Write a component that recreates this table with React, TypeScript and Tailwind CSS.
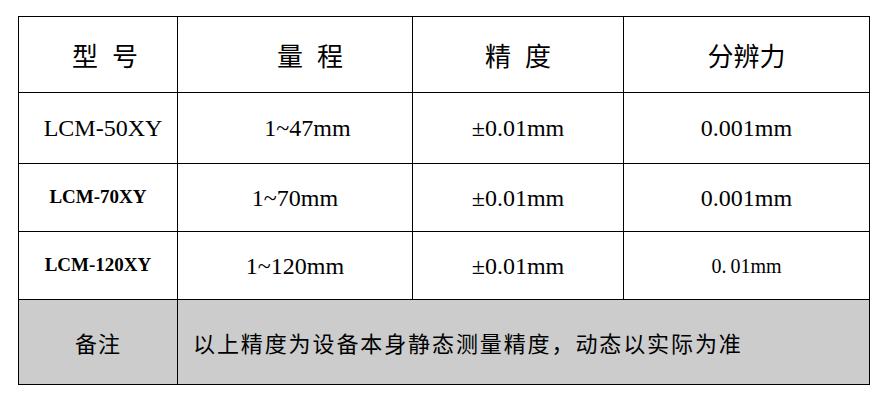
import React from "react";

const cjk = "font-['Noto_Sans_CJK_SC',sans-serif]";
const serif = "font-['Liberation_Serif','Noto_Sans_CJK_SC',serif]";

type Row = {
  model: string;
  modelClass: string;
  range: string;
  rangeClass?: string;
  precision: string;
  resolution: string;
  resClass: string;
  height: string;
};

const rows: Row[] = [
  {
    model: "LCM-50XY",
    modelClass: "text-[24px] font-normal pl-[10px]",
    range: "1~47mm",
    rangeClass: "pl-[25px]",
    precision: "±0.01mm",
    resolution: "0.001mm",
    resClass: "text-[24px]",
    height: "h-[71px]",
  },
  {
    model: "LCM-70XY",
    modelClass: "text-[19px] font-bold",
    range: "1~70mm",
    precision: "±0.01mm",
    resolution: "0.001mm",
    resClass: "text-[24px]",
    height: "h-[68px]",
  },
  {
    model: "LCM-120XY",
    modelClass: "text-[19px] font-bold",
    range: "1~120mm",
    precision: "±0.01mm",
    resolution: "0.\u200901mm",
    resClass: "text-[20px]",
    height: "h-[68px]",
  },
];

function Spaced({ a, b }: { a: string; b: string }) {
  return (
    <>
      {a}
      <span className="inline-block w-[14px]" />
      {b}
    </>
  );
}

export default function App() {
  const cell = "border border-black text-center align-middle p-0";
  return (
    <div className="w-[883px] h-[404px] bg-white pt-[16px] pl-[18px]">
      <table className="border-collapse table-fixed w-[851px] text-black">
        <colgroup>
          <col className="w-[159px]" />
          <col className="w-[235px]" />
          <col className="w-[211px]" />
          <col className="w-[246px]" />
        </colgroup>
        <tbody>
          <tr className="h-[76px]">
            <td className={`${cell} ${cjk} text-[26px] pl-[14px]`}>
              <Spaced a="型" b="号" />
            </td>
            <td className={`${cell} ${cjk} text-[26px] pl-[30px]`}>
              <Spaced a="量" b="程" />
            </td>
            <td className={`${cell} ${cjk} text-[26px]`}>
              <Spaced a="精" b="度" />
            </td>
            <td className={`${cell} ${cjk} text-[26px]`}>分辨力</td>
          </tr>
          {rows.map((r) => (
            <tr key={r.model} className={r.height}>
              <td className={`${cell} ${serif} ${r.modelClass}`}>{r.model}</td>
              <td className={`${cell} ${serif} text-[24px] ${r.rangeClass ?? ""}`}>{r.range}</td>
              <td className={`${cell} ${serif} text-[24px]`}>{r.precision}</td>
              <td className={`${cell} ${serif} ${r.resClass}`}>{r.resolution}</td>
            </tr>
          ))}
          <tr className="h-[85px] bg-[#cccccc]">
            <td className={`${cell} ${cjk} text-[22px] tracking-[1px]`}>备注</td>
            <td
              colSpan={3}
              className={`border border-black align-middle text-left pl-[15px] ${cjk} text-[22px] tracking-[1.9px]`}
            >
              以上精度为设备本身静态测量精度，动态以实际为准
            </td>
          </tr>
        </tbody>
      </table>
    </div>
  );
}
